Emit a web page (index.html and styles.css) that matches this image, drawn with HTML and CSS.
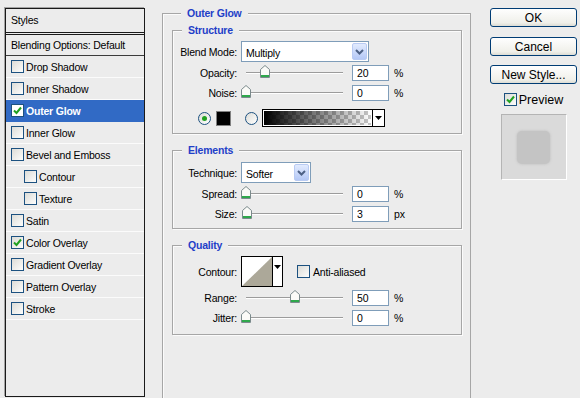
FILE: index.html
```html
<!DOCTYPE html>
<html lang="en">
<head>
    <meta charset="UTF-8">
    <title>Layer Style</title>
    <link rel="stylesheet" href="styles.css">
</head>
<body>
    <div class="dialog">
        <div class="styles-list">
            <div class="list-head">Styles</div>
            <div class="list-blend">Blending Options: Default</div>
            <div class="list-item"><span class="check"></span>Drop Shadow</div>
            <div class="list-item"><span class="check"></span>Inner Shadow</div>
            <div class="list-item selected"><span class="check on"><svg width="11" height="11" viewBox="0 0 11 11"><path d="M2 5.5 L4.5 8 L9 2.5" fill="none" stroke="#21a121" stroke-width="2"/></svg></span>Outer Glow</div>
            <div class="list-item"><span class="check"></span>Inner Glow</div>
            <div class="list-item"><span class="check"></span>Bevel and Emboss</div>
            <div class="list-item sub"><span class="check"></span>Contour</div>
            <div class="list-item sub"><span class="check"></span>Texture</div>
            <div class="list-item"><span class="check"></span>Satin</div>
            <div class="list-item"><span class="check on"><svg width="11" height="11" viewBox="0 0 11 11"><path d="M2 5.5 L4.5 8 L9 2.5" fill="none" stroke="#21a121" stroke-width="2"/></svg></span>Color Overlay</div>
            <div class="list-item"><span class="check"></span>Gradient Overlay</div>
            <div class="list-item"><span class="check"></span>Pattern Overlay</div>
            <div class="list-item"><span class="check"></span>Stroke</div>
        </div>

        <fieldset class="group outer">
            <legend>Outer Glow</legend>

            <fieldset class="group structure">
                <legend>Structure</legend>
                <div class="row first">
                    <span class="lbl">Blend Mode:</span>
                    <div class="select mode"><span class="sel-text">Multiply</span><span class="drop"><svg width="9" height="6" viewBox="0 0 9 6"><path d="M1 1 L4.5 4.5 L8 1" fill="none" stroke="#4d6185" stroke-width="2"/></svg></span></div>
                </div>
                <div class="row opacity">
                    <span class="lbl">Opacity:</span>
                    <div class="slider"><span class="thumb" style="--v:20"><svg width="10" height="13" viewBox="0 0 10 13"><path d="M0.5 4.5 L5 0.5 L9.5 4.5 V12.5 H0.5 Z" fill="#fbfbf8" stroke="#7b8a8c"/><rect x="1" y="10" width="8" height="2" fill="#2fa84c"/></svg></span></div>
                    <span class="field">20</span><span class="unit">%</span>
                </div>
                <div class="row noise">
                    <span class="lbl">Noise:</span>
                    <div class="slider"><span class="thumb" style="--v:0"><svg width="10" height="13" viewBox="0 0 10 13"><path d="M0.5 4.5 L5 0.5 L9.5 4.5 V12.5 H0.5 Z" fill="#fbfbf8" stroke="#7b8a8c"/><rect x="1" y="10" width="8" height="2" fill="#2fa84c"/></svg></span></div>
                    <span class="field">0</span><span class="unit">%</span>
                </div>
                <div class="color-row">
                    <span class="radio on"></span>
                    <span class="swatch"></span>
                    <span class="radio"></span>
                    <div class="grad"><span class="grad-fill"></span><span class="grad-btn"><svg width="7" height="4" viewBox="0 0 7 4"><path d="M0 0 H7 L3.5 4 Z" fill="#000"/></svg></span></div>
                </div>
            </fieldset>

            <fieldset class="group elements">
                <legend>Elements</legend>
                <div class="row first">
                    <span class="lbl">Technique:</span>
                    <div class="select technique"><span class="sel-text">Softer</span><span class="drop"><svg width="9" height="6" viewBox="0 0 9 6"><path d="M1 1 L4.5 4.5 L8 1" fill="none" stroke="#4d6185" stroke-width="2"/></svg></span></div>
                </div>
                <div class="row spread">
                    <span class="lbl">Spread:</span>
                    <div class="slider"><span class="thumb" style="--v:0"><svg width="10" height="13" viewBox="0 0 10 13"><path d="M0.5 4.5 L5 0.5 L9.5 4.5 V12.5 H0.5 Z" fill="#fbfbf8" stroke="#7b8a8c"/><rect x="1" y="10" width="8" height="2" fill="#2fa84c"/></svg></span></div>
                    <span class="field">0</span><span class="unit">%</span>
                </div>
                <div class="row size">
                    <span class="lbl">Size:</span>
                    <div class="slider"><span class="thumb" style="--v:1"><svg width="10" height="13" viewBox="0 0 10 13"><path d="M0.5 4.5 L5 0.5 L9.5 4.5 V12.5 H0.5 Z" fill="#fbfbf8" stroke="#7b8a8c"/><rect x="1" y="10" width="8" height="2" fill="#2fa84c"/></svg></span></div>
                    <span class="field">3</span><span class="unit">px</span>
                </div>
            </fieldset>

            <fieldset class="group quality">
                <legend>Quality</legend>
                <div class="row first">
                    <span class="lbl">Contour:</span>
                    <div class="contour"><span class="contour-img"><svg width="30" height="29" viewBox="0 0 30 29"><path d="M0 29 L30 0 V29 Z" fill="#aca899"/></svg></span><span class="contour-btn"><svg width="7" height="4" viewBox="0 0 7 4"><path d="M0 0 H7 L3.5 4 Z" fill="#000"/></svg></span></div>
                    <span class="check aa"></span><span class="aa-text">Anti-aliased</span>
                </div>
                <div class="row range">
                    <span class="lbl">Range:</span>
                    <div class="slider"><span class="thumb" style="--v:50"><svg width="10" height="13" viewBox="0 0 10 13"><path d="M0.5 4.5 L5 0.5 L9.5 4.5 V12.5 H0.5 Z" fill="#fbfbf8" stroke="#7b8a8c"/><rect x="1" y="10" width="8" height="2" fill="#2fa84c"/></svg></span></div>
                    <span class="field">50</span><span class="unit">%</span>
                </div>
                <div class="row jitter">
                    <span class="lbl">Jitter:</span>
                    <div class="slider"><span class="thumb" style="--v:0"><svg width="10" height="13" viewBox="0 0 10 13"><path d="M0.5 4.5 L5 0.5 L9.5 4.5 V12.5 H0.5 Z" fill="#fbfbf8" stroke="#7b8a8c"/><rect x="1" y="10" width="8" height="2" fill="#2fa84c"/></svg></span></div>
                    <span class="field">0</span><span class="unit">%</span>
                </div>
            </fieldset>
        </fieldset>

        <div class="side">
            <button class="btn ok">OK</button>
            <button class="btn cancel">Cancel</button>
            <button class="btn new-style">New Style...</button>
            <div class="preview-check">
                <span class="check on"><svg width="11" height="11" viewBox="0 0 11 11"><path d="M2 5.5 L4.5 8 L9 2.5" fill="none" stroke="#21a121" stroke-width="2"/></svg></span>Preview
            </div>
            <div class="preview-box"><span class="preview-shape"></span></div>
        </div>
    </div>
</body>
</html>
```

FILE: styles.css
```css
html, body {
    margin: 0;
    padding: 0;
    overflow: hidden;
}
body {
    background-color: #ececec;
    font-family: 'Liberation Sans', Arial, sans-serif;
    font-size: 10.5px;
    letter-spacing: -0.2px;
    color: #000;
}
.dialog {
    display: flex;
    align-items: flex-start;
    width: 580px;
    height: 398px;
}

/* left styles list */
.styles-list {
    box-sizing: border-box;
    width: 140px;
    height: 389px;
    margin: 8px 0 0 5px;
    border: 1px solid #1a1a1a;
    box-shadow: -1px -1px 0 #a4a4a4;
    background-color: #ececec;
}
.list-head {
    height: 23px;
    line-height: 23px;
    padding-left: 5px;
    border-bottom: 3px double #1a1a1a;
}
.list-blend {
    box-sizing: border-box;
    height: 21px;
    line-height: 20px;
    padding-left: 5px;
    border-bottom: 1px solid #3c3c3c;
}
.list-item {
    box-sizing: border-box;
    display: flex;
    align-items: center;
    height: 22px;
    padding-left: 5px;
    border-bottom: 1px solid #fbfbfb;
}
.list-item.sub {
    padding-left: 18px;
}
.list-item.selected {
    background-color: #316ac5;
    color: #fff;
    font-weight: bold;
    border-bottom-color: #316ac5;
}
.check {
    box-sizing: border-box;
    display: inline-flex;
    align-items: center;
    justify-content: center;
    width: 13px;
    height: 13px;
    margin-right: 2px;
    border: 1px solid #1c5180;
    background: linear-gradient(135deg, #dcdcd7, #fdfdfc);
}
.selected .check {
    background: #fff;
}

/* group boxes */
.group {
    margin: 0;
    padding: 0;
    min-width: 0;
    border: 1px solid #a6a6a6;
    box-shadow: inset 1px 1px 0 #fbfbfb, 1px 1px 0 #fbfbfb;
}
.group legend {
    margin-left: 9px;
    padding: 0 6px;
    line-height: 14px;
    font-weight: bold;
    color: #1f3fc8;
    background-color: #ececec;
}
.outer {
    box-sizing: border-box;
    width: 309px;
    height: 392px;
    margin: 6px 0 0 17px;
    padding: 0 8px 0 9px;
    border-bottom: none;
    box-shadow: inset 1px 1px 0 #fbfbfb;
}
.structure {
    margin-top: 3px;
    padding-bottom: 6px;
}
.elements {
    margin-top: 9px;
    padding-bottom: 6px;
}
.quality {
    margin-top: 9px;
    padding-bottom: 8px;
}

.row {
    display: flex;
    align-items: center;
    height: 16px;
}
.lbl {
    width: 64px;
    margin-right: 4px;
    text-align: right;
    white-space: nowrap;
}
.structure .first {
    height: 21px;
    margin-top: 4px;
}
.opacity { margin-top: 3px; }
.noise { margin-top: 4px; }
.elements .first {
    height: 21px;
    margin-top: 5px;
}
.spread { margin-top: 3px; }
.size { margin-top: 4px; }
.quality .first {
    height: 31px;
    margin-top: 4px;
}
.range { margin-top: 3px; }
.jitter { margin-top: 4px; }

/* dropdowns */
.select {
    box-sizing: border-box;
    display: flex;
    align-items: center;
    justify-content: space-between;
    height: 21px;
    border: 1px solid #7f9db9;
    background-color: #fff;
}
.select.mode { width: 128px; }
.select.technique { width: 70px; }
.sel-text {
    padding-left: 4px;
    padding-top: 2px;
}
.drop {
    box-sizing: border-box;
    display: flex;
    align-items: center;
    justify-content: center;
    width: 15px;
    height: 17px;
    margin-right: 1px;
    border: 1px solid #b9cbf3;
    border-radius: 2px;
    background: linear-gradient(#e2ebfe, #b4c8f6);
}

/* sliders */
.slider {
    position: relative;
    width: 104px;
    height: 16px;
}
.slider::before {
    content: "";
    position: absolute;
    left: 5px;
    right: 2px;
    top: 7px;
    height: 1px;
    background-color: #9c9c9c;
    box-shadow: 0 1px 0 #fff;
}
.thumb {
    position: absolute;
    top: 0;
    left: calc(var(--v) * 0.97px);
    width: 10px;
    height: 13px;
}
.thumb svg {
    display: block;
}
.field {
    box-sizing: border-box;
    width: 37px;
    height: 16px;
    margin-left: 7px;
    padding: 1px 0 0 4px;
    line-height: 13px;
    border: 1px solid #7f9db9;
    background-color: #fff;
}
.unit {
    margin-left: 5px;
}

/* color row */
.color-row {
    display: flex;
    align-items: center;
    height: 18px;
    margin: 8px 0 0 25px;
}
.radio {
    box-sizing: border-box;
    display: inline-flex;
    align-items: center;
    justify-content: center;
    width: 13px;
    height: 13px;
    border: 1px solid #1c5180;
    border-radius: 50%;
    background: linear-gradient(135deg, #dcdcd7, #fff);
}
.radio.on::after {
    content: "";
    width: 5px;
    height: 5px;
    border-radius: 50%;
    background-color: #21a121;
}
.swatch {
    box-sizing: border-box;
    width: 15px;
    height: 15px;
    margin: 0 14px 0 5px;
    border: 1px solid #808080;
    background-color: #000;
}
.grad {
    box-sizing: border-box;
    display: flex;
    width: 123px;
    height: 18px;
    margin-left: 4px;
    border: 1px solid #000;
}
.grad-fill {
    flex: 1;
    border: 1px solid #fff;
    background-image: linear-gradient(to right, #000, rgba(0, 0, 0, 0)),
        conic-gradient(#c6c6c6 25%, #fff 0 50%, #c6c6c6 0 75%, #fff 0);
    background-size: auto, 8px 8px;
}
.grad-btn {
    display: flex;
    align-items: center;
    justify-content: center;
    width: 11px;
    border-left: 1px solid #000;
    background-color: #fff;
}

/* contour */
.contour {
    box-sizing: border-box;
    display: flex;
    width: 42px;
    height: 31px;
    border: 1px solid #000;
}
.contour-img {
    width: 30px;
    background-color: #fff;
}
.contour-img svg {
    display: block;
}
.contour-btn {
    display: flex;
    justify-content: center;
    width: 11px;
    padding-top: 8px;
    border-left: 1px solid #000;
    background-color: #fff;
}
.check.aa {
    margin-left: 14px;
    margin-right: 3px;
}

/* right column */
.side {
    display: flex;
    flex-direction: column;
    align-items: center;
    width: 87px;
    margin: 8px 0 0 19px;
}
.btn {
    box-sizing: border-box;
    width: 87px;
    height: 19px;
    padding: 0;
    border: 1px solid #003c74;
    border-radius: 3px;
    background: linear-gradient(#fefefe, #f0f0ea 80%, #dcdcd4);
    font-family: 'Liberation Sans', Arial, sans-serif;
    font-size: 12px;
    line-height: 16px;
    color: #000;
}
.ok { margin-bottom: 10px; }
.cancel { margin-bottom: 9px; }
.preview-check {
    display: flex;
    align-items: center;
    height: 13px;
    margin-top: 9px;
    font-size: 12.5px;
    letter-spacing: 0;
}
.preview-check .check {
    margin-right: 2px;
}
.preview-box {
    box-sizing: border-box;
    display: flex;
    align-items: center;
    justify-content: center;
    width: 66px;
    height: 66px;
    margin-top: 8px;
    border: 1px solid #fff;
    border-top-color: #b4b4b4;
    border-left-color: #b4b4b4;
    background-color: #dadada;
}
.preview-shape {
    width: 33px;
    height: 33px;
    border-radius: 5px;
    background-color: #c4c4c4;
    box-shadow: 0 0 3px #bcbcbc;
}
```
